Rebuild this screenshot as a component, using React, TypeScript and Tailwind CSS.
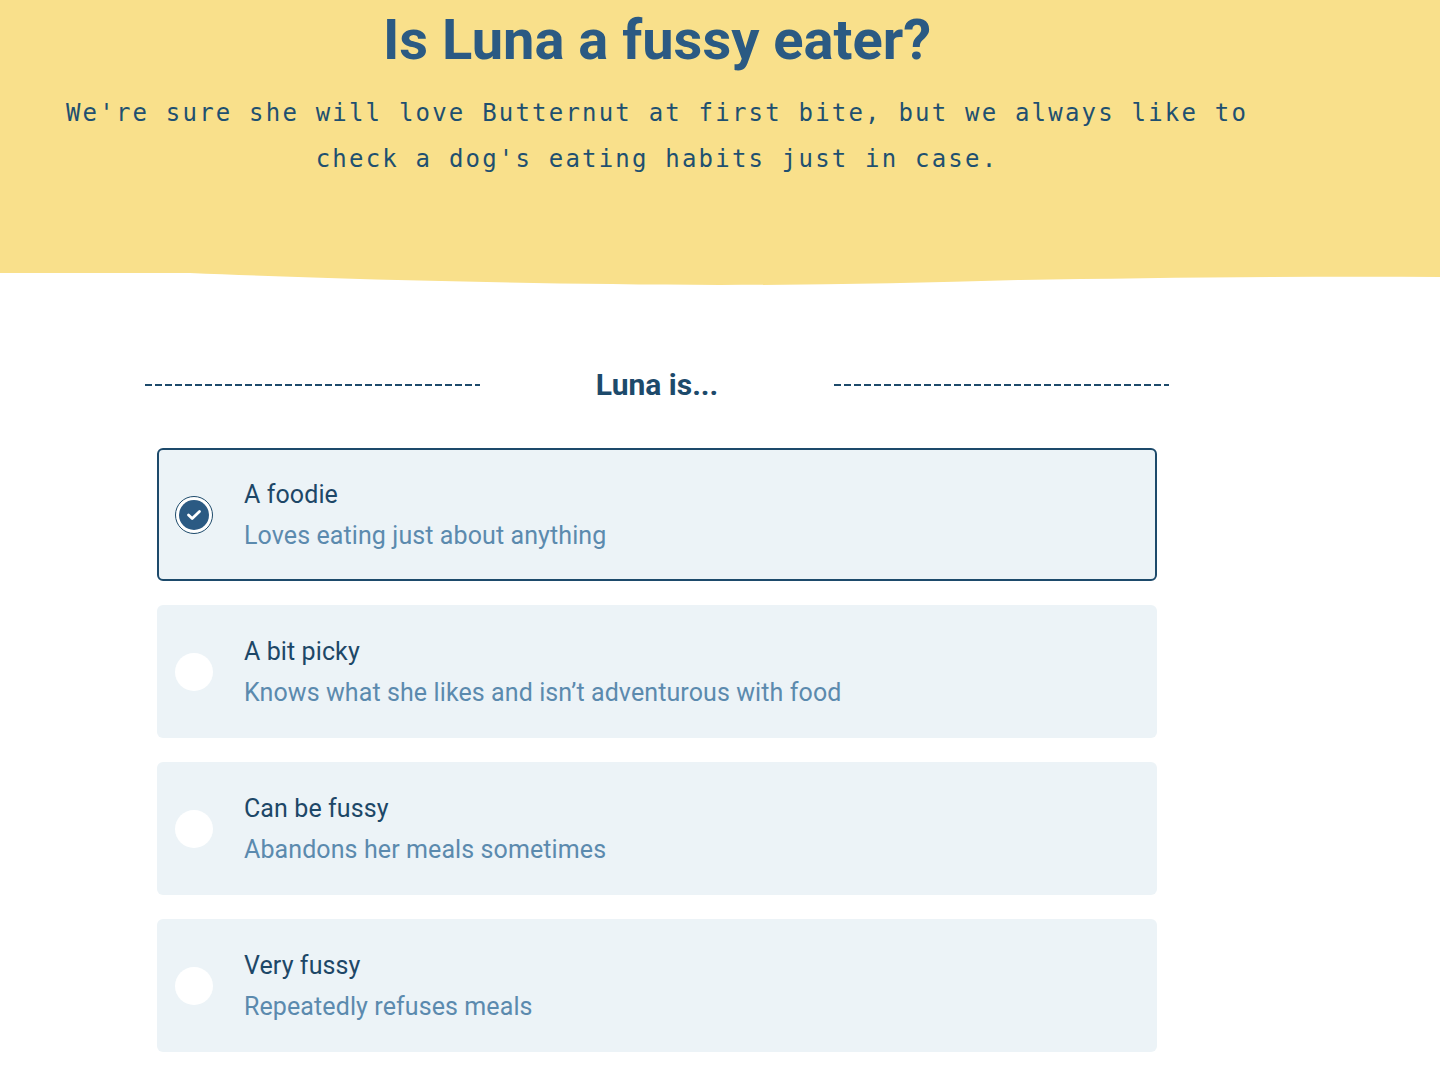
import { useState } from 'react';

const options = [
  { id: 'foodie', title: 'A foodie', desc: 'Loves eating just about anything' },
  { id: 'picky', title: 'A bit picky', desc: 'Knows what she likes and isn\u2019t adventurous with food' },
  { id: 'fussy', title: 'Can be fussy', desc: 'Abandons her meals sometimes' },
  { id: 'very', title: 'Very fussy', desc: 'Repeatedly refuses meals' },
];

function DashedLine() {
  return (
    <svg width="335" height="2" className="block">
      <line x1="0" y1="1" x2="335" y2="1" stroke="#1d4a6b" strokeWidth="2" strokeDasharray="7 3" />
    </svg>
  );
}

function Radio({ checked }: { checked: boolean }) {
  if (!checked) {
    return <div className="w-[38px] h-[38px] rounded-full bg-white shrink-0" />;
  }
  return (
    <div className="w-[38px] h-[38px] rounded-full bg-white border-[1.5px] border-[#1d4a6b] shrink-0 flex items-center justify-center">
      <div className="w-[30px] h-[30px] rounded-full bg-[#2b5a83] flex items-center justify-center">
        <svg width="16" height="12" viewBox="0 0 16 12" fill="none">
          <path d="M2.5 6 L6.2 9.5 L13.5 2.5" stroke="white" strokeWidth="2.8" strokeLinecap="round" strokeLinejoin="round" />
        </svg>
      </div>
    </div>
  );
}

export default function App() {
  const [selected, setSelected] = useState('foodie');

  return (
    <div className="min-h-screen bg-white font-['Roboto',sans-serif]">
      {/* Header */}
      <header className="bg-[#f9e08b]">
        <div className="w-[1314px] h-[272px] flex flex-col items-center pt-[12px]">
          <h1 className="text-[56px] leading-[56px] font-bold text-[#2b5a83]">
            Is Luna a fussy eater?
          </h1>
          <p className="mt-[22px] w-[1220px] text-center font-['DejaVu_Sans_Mono',monospace] text-[24px] leading-[46px] tracking-[2.2px] text-[#1f5070]">
            We're sure she will love Butternut at first bite, but we always like to check a dog's eating habits just in case.
          </p>
        </div>
      </header>
      <svg className="block w-full h-[16px]" viewBox="0 0 1440 16" preserveAspectRatio="none">
        <path
          d="M0 0 H1440 V5 C1300 4 1150 6 1020 8 C 920 11 820 13 720 13 C 520 12 330 7 190 1 L0 1 Z"
          fill="#f9e08b"
        />
      </svg>

      {/* Question */}
      <main className="w-[1314px] flex flex-col items-center pt-[82px]">
        <div className="w-[1024px] flex items-center justify-between">
          <DashedLine />
          <h2 className="text-[30px] font-bold text-[#1d4a6b] leading-none">Luna is...</h2>
          <DashedLine />
        </div>

        <div className="w-[1000px] mt-[48px] flex flex-col gap-[24px]">
          {options.map((o) => {
            const checked = selected === o.id;
            return (
              <button
                key={o.id}
                onClick={() => setSelected(o.id)}
                className={`h-[133px] w-full rounded-[6px] bg-[#ecf3f7] flex items-center text-left pl-[16px] border-2 ${
                  checked ? 'border-[#1d4a6b]' : 'border-transparent'
                }`}
              >
                <Radio checked={checked} />
                <div className="ml-[31px] flex flex-col gap-[8px]">
                  <span className="text-[25px] leading-[33px] tracking-[0.1px] text-[#1d4767]">{o.title}</span>
                  <span className="text-[25px] leading-[33px] tracking-[0.1px] text-[#5b8aae]">{o.desc}</span>
                </div>
              </button>
            );
          })}
        </div>
      </main>
    </div>
  );
}
